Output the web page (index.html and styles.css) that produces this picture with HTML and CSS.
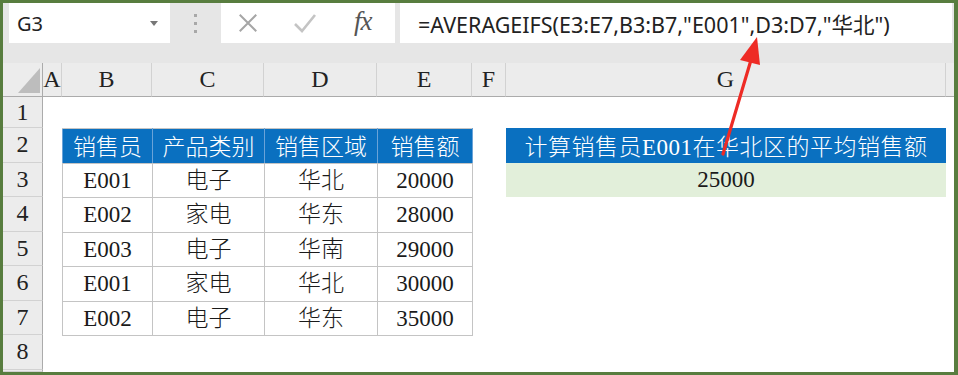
FILE: index.html
```html
<!DOCTYPE html>
<html lang="zh-CN">
<head>
<meta charset="utf-8">
<title>AVERAGEIFS</title>
<link rel="stylesheet" href="styles.css">
</head>
<body>
<div class="frame">
  <div class="toolbar">
    <div class="namebox"><span class="name">G3</span><span class="drop"></span></div>
    <div class="grip"><i></i><i></i><i></i></div>
    <div class="fxbox">
      <svg class="ico" width="24" height="24" viewBox="0 0 24 24"><path d="M3 3 L21 21 M21 3 L3 21" stroke="#a6a6a6" stroke-width="2.2" fill="none"/></svg>
      <svg class="ico" width="24" height="24" viewBox="0 0 24 24"><path d="M2 13 L9 20 L22 4" stroke="#c4c4c4" stroke-width="2.6" fill="none"/></svg>
      <span class="fx">fx</span>
    </div>
    <div class="formula">=AVERAGEIFS(E3:E7,B3:B7,"E001",D3:D7,"华北")</div>
  </div>

  <div class="sheet">
    <div class="hd corner"><span class="tri"></span></div>
    <div class="hd col">A</div>
    <div class="hd col">B</div>
    <div class="hd col">C</div>
    <div class="hd col">D</div>
    <div class="hd col">E</div>
    <div class="hd col">F</div>
    <div class="hd col">G</div>
    <div class="hd col end"></div>

    <div class="hd row r1">1</div>
    <div class="hd row r2">2</div>
    <div class="hd row r3">3</div>
    <div class="hd row r4">4</div>
    <div class="hd row r5">5</div>
    <div class="hd row r6">6</div>
    <div class="hd row r7">7</div>
    <div class="hd row r8">8</div>
    <div class="hd row r9"></div>

    <table class="data">
      <colgroup><col class="cb"><col class="cc"><col class="cd"><col class="ce"></colgroup>
      <tr class="th"><td>销售员</td><td>产品类别</td><td>销售区域</td><td>销售额</td></tr>
      <tr><td>E001</td><td>电子</td><td>华北</td><td>20000</td></tr>
      <tr><td>E002</td><td>家电</td><td>华东</td><td>28000</td></tr>
      <tr><td>E003</td><td>电子</td><td>华南</td><td>29000</td></tr>
      <tr><td>E001</td><td>家电</td><td>华北</td><td>30000</td></tr>
      <tr><td>E002</td><td>电子</td><td>华东</td><td>35000</td></tr>
    </table>

    <div class="g2">计算销售员E001在华北区的平均销售额</div>
    <div class="g3">25000</div>
  </div>

  <svg class="arrow" width="958" height="375" viewBox="0 0 958 375">
    <line x1="723" y1="154" x2="751" y2="60" stroke="#ee2b25" stroke-width="3.2" stroke-linecap="round"/>
    <polygon points="757,37 740,60 760,65" fill="#ee2b25"/>
  </svg>
</div>
</body>
</html>
```
FILE: styles.css
```css
* { box-sizing: border-box; }
html, body { margin: 0; padding: 0; background: #fff; }
.frame {
  position: relative;
  width: 958px;
  height: 375px;
  border-style: solid;
  border-color: #587d3f;
  border-width: 3px 4px 3px 3px;
  background: #e6e6e6;
  overflow: hidden;
  display: flex;
  flex-direction: column;
}
.toolbar {
  height: 40px;
  margin-bottom: 20px;
  display: flex;
  align-items: stretch;
  flex: none;
}
.namebox {
  margin-left: 6px;
  width: 161px;
  background: #fff;
  display: flex;
  align-items: center;
  justify-content: space-between;
  padding: 0 12px 0 8px;
  font-family: "Noto Sans", "Liberation Sans", sans-serif;
  font-size: 20px;
  color: #222;
}
.drop {
  width: 0; height: 0;
  border-left: 4px solid transparent;
  border-right: 4px solid transparent;
  border-top: 5px solid #777;
}
.grip {
  width: 51px;
  display: flex;
  flex-direction: column;
  align-items: center;
  justify-content: center;
  gap: 5px;
}
.grip i { display: block; width: 3px; height: 3px; background: #a8a8a8; }
.fxbox {
  width: 174px;
  background: #fff;
  display: flex;
  align-items: center;
  padding: 0 0 0 16px;
}
.ico { display: block; }
.fxbox .ico:first-child { margin-right: 34px; width: 22px; height: 22px; }
.fxbox .ico:nth-child(2) { margin-right: 37px; }
.fx {
  font-family: "Liberation Serif", serif;
  font-style: italic;
  font-size: 27px;
  color: #555;
  letter-spacing: -1px;
  margin-top: -4px;
}
.formula {
  flex: 1;
  margin-left: 5px;
  margin-right: 2px;
  background: #fff;
  display: flex;
  align-items: center;
  padding-left: 18px;
  font-family: "Noto Sans", "Noto Sans CJK SC", sans-serif;
  font-size: 21.5px;
  color: #222;
  white-space: nowrap;
}
.sheet {
  flex: 1;
  background: #fff;
  display: grid;
  grid-template-columns: 40px 19px 90px 112px 113px 95px 34px 440px 1fr;
  grid-template-rows: 34px 31px repeat(7, 34.5px) 1fr;
}
.hd {
  background: #ececec;
  font-family: "Liberation Serif", serif;
  font-size: 24px;
  color: #222;
  display: flex;
  align-items: center;
  justify-content: center;
}
.col { border-right: 1px solid #d2d2d2; border-bottom: 1px solid #ababab; grid-row: 1; }
.col.end { border-right: none; }
.corner { grid-row: 1; grid-column: 1; position: relative; border-right: 1px solid #ababab; border-bottom: 1px solid #ababab; }
.tri {
  position: absolute;
  right: 2px; bottom: 3px;
  width: 0; height: 0;
  border-left: 22px solid transparent;
  border-bottom: 25px solid #bdbdbd;
}
.row { grid-column: 1; border-right: 1px solid #ababab; border-bottom: 1px solid #d2d2d2; }
.r1 { grid-row: 2; } .r2 { grid-row: 3; } .r3 { grid-row: 4; } .r4 { grid-row: 5; }
.r5 { grid-row: 6; } .r6 { grid-row: 7; } .r7 { grid-row: 8; } .r8 { grid-row: 9; } .r9 { grid-row: 10; }

.data {
  grid-column: 3 / 7;
  grid-row: 3 / 9;
  border-collapse: collapse;
  table-layout: fixed;
  width: 410px;
  height: 207px;
  font-family: "Liberation Serif", "Noto Sans CJK SC", serif;
  font-size: 23px;
  font-weight: 300;
  color: #1a1a1a;
}
.cb { width: 90px; } .cc { width: 112px; } .cd { width: 113px; } .ce { width: 95px; }
.data td {
  border: 1px solid #c4c4c4;
  text-align: center;
  padding: 0;
  height: 34.5px;
  line-height: 1;
}
.data .th td {
  background: #0a70c0;
  color: #fff;
  font-family: "Noto Sans CJK SC", sans-serif;
  font-size: 23px;
  font-weight: 300;
  border-color: #c4c4c4 #6aa3d8 #c4c4c4 #6aa3d8;
}
.g2 {
  grid-column: 8;
  grid-row: 3;
  background: #0a70c0;
  color: #fff;
  font-family: "Liberation Serif", "Noto Sans CJK SC", serif;
  font-size: 23px;
  font-weight: 300;
  display: flex;
  align-items: center;
  justify-content: center;
  letter-spacing: 0.5px;
}
.g3 {
  grid-column: 8;
  grid-row: 4;
  background: #e2efda;
  color: #1a1a1a;
  font-family: "Liberation Serif", serif;
  font-size: 23px;
  display: flex;
  align-items: center;
  justify-content: center;
}
.arrow {
  position: absolute;
  left: -3px;
  top: -3px;
  pointer-events: none;
}
```
